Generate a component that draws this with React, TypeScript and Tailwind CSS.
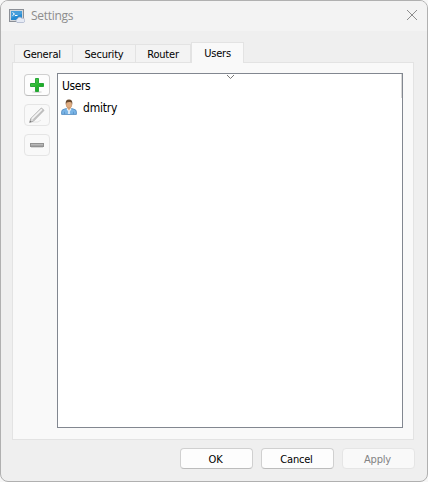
import React from 'react';

const PlusIcon = () => (
  <svg width="16" height="16" viewBox="0 0 16 16">
    <defs>
      <linearGradient id="green" x1="0" y1="0" x2="1" y2="1">
        <stop offset="0" stopColor="#54d052" />
        <stop offset="0.55" stopColor="#25b52c" />
        <stop offset="1" stopColor="#0c991c" />
      </linearGradient>
    </defs>
    <ellipse cx="8" cy="15" rx="5" ry="0.8" fill="#d0d0d0" />
    <path d="M6.5 1.5h3v5h5v3h-5v5h-3v-5h-5v-3h5z" fill="url(#green)" stroke="#27a737" />
  </svg>
);

const PencilIcon = () => (
  <svg width="16" height="16" viewBox="0 0 16 16">
    <path d="M2 15h7l3-2" fill="none" stroke="#e3e3e3" />
    <path d="M.6 15.4l1.2-3.8L12.4 1 15 3.4 4.4 14.2z" fill="#dcdcdc" stroke="#a6a6a6" strokeWidth="0.9" />
    <path d="M3 11.7L12.8 2.2" stroke="#f6f6f6" strokeWidth="1.2" />
    <path d="M4.3 12.9L14 3.3" stroke="#b0b0b0" strokeWidth="0.8" />
    <path d="M.6 15.4l.6-2 1.4 1.4z" fill="#777" />
  </svg>
);

const MinusIcon = () => (
  <svg width="16" height="16" viewBox="0 0 16 16">
    <rect x="2" y="10" width="12" height="1" fill="#d9d9d9" />
    <rect x="1.5" y="6.5" width="13" height="3" fill="#a5a5a5" stroke="#929292" />
    <path d="M2 7.5h12" stroke="#b8b8b8" />
  </svg>
);

const UserIcon = () => (
  <svg width="16" height="16" viewBox="0 0 16 16">
    <path d="M.6 15.4v-2.6q0-2.3 3-2.8L6 9.4h4l2.4.6q3 .5 3 2.8v2.6z" fill="#79b4e6" stroke="#4d87bd" strokeWidth="0.8" />
    <path d="M5.5 9.8L8 14l2.5-4.2L9.8 9H6.2z" fill="#f5f9fc" />
    <path d="M7.3 11h1.4l.5 4H6.8z" fill="#dce9f4" />
    <path d="M6.4 7.5h3.2v2.3L8 11.2 6.4 9.8z" fill="#d9a77b" />
    <ellipse cx="8" cy="5.3" rx="2.9" ry="3.8" fill="#e0ac80" stroke="#b58258" strokeWidth="0.5" />
    <path d="M4.8 5.5Q4 .5 8 .5t3.2 5l-.8-2.2Q8 2.7 5.6 3.4z" fill="#68492f" />
    <path d="M3.5 12.7v2.5M12.5 12.7v2.5" stroke="#4b86be" strokeWidth="0.6" />
  </svg>
);

const AppIcon = () => (
  <svg width="16" height="16" viewBox="0 0 16 16">
    <rect x="0.5" y="1.5" width="14" height="12" fill="#d5d7da" stroke="#8b8f96" />
    <rect x="2" y="3" width="11" height="9" fill="#268bd2" />
    <path d="M2 3h11v3L2 10z" fill="#469edb" />
    <path d="M3.5 4.5l2 1.5-2 1.5M6 7.5h2.5" fill="none" stroke="#fff" />
    <path d="M8 14.5a2 2 0 01.4-3.6 2.5 2.5 0 014.5-.6 2 2 0 011.6 4.2z" fill="#e5eaf4" stroke="#a3aec6" strokeWidth="0.7" />
  </svg>
);

const tabText = 'flex justify-center border-t border-r border-[#e3e3e3] bg-[#f3f3f3] h-[18px] text-[11px] leading-[20px]';

export default function App() {
  return (
    <div className="h-[482px] w-[428px] bg-[#f7f7f7] font-['DejaVu_Sans_Condensed','DejaVu_Sans',sans-serif] tracking-[-0.2px] text-black">
      <div className="flex h-[482px] w-[428px] flex-col overflow-hidden rounded-[8px] border border-[#b0b0b0] bg-[#efefef]">
        <header className="flex h-[30px] shrink-0 items-center bg-[#f3f3f3] pl-2 pr-[9px]">
          <AppIcon />
          <span className="ml-[6px] font-['Open_Sans'] text-[12px] leading-4 tracking-[-0.3px] text-[#8d8d8d]">Settings</span>
          <svg className="-mt-[2px] ml-auto" width="12" height="12" viewBox="0 0 12 12">
            <path d="M1 1l10 10M11 1L1 11" stroke="#8c8c8c" fill="none" />
          </svg>
        </header>

        <nav className="mt-[11px] flex h-5 shrink-0 items-end pl-[13px]">
          <div className={`${tabText} w-[59px] border-l pr-[3px]`}>General</div>
          <div className={`${tabText} w-[63px]`}>Security</div>
          <div className={`${tabText} w-[55px]`}>Router</div>
          <div className="z-10 -mb-px flex h-[21px] w-[53px] justify-center border border-b-0 border-[#e3e3e3] bg-[#f9f9f9] text-[11px] leading-[21px]">Users</div>
        </nav>

        <main className="ml-[11px] flex h-[378px] w-[402px] shrink-0 border border-[#e3e3e3] bg-[#f9f9f9] pl-[11px] pt-[10px]">
          <div className="flex w-[33px] flex-col gap-2 pt-px">
            <button className="flex h-[22px] w-[26px] items-center justify-center rounded-[4px] border border-[#d0d0d0] border-b-[#bcbcbc] bg-[#fdfdfd]"><PlusIcon /></button>
            <button className="flex h-[22px] w-[26px] items-center justify-center rounded-[4px] border border-[#e5e5e5] bg-[#f9f9f9]"><PencilIcon /></button>
            <button className="flex h-[22px] w-[26px] items-center justify-center rounded-[4px] border border-[#e5e5e5] bg-[#f9f9f9]"><MinusIcon /></button>
          </div>
          <section className="h-[355px] w-[346px] border border-[#828790] bg-white">
            <div className="relative flex h-[24px] items-center border-r border-[#d8d8d8] pl-1 text-[12px] tracking-[-0.4px]">
              Users
              <svg className="absolute left-[168px] top-0" width="9" height="6" viewBox="0 0 9 6">
                <path d="M1 1l3.5 3.5L8 1" fill="none" stroke="#777" />
              </svg>
            </div>
            <div className="flex h-5 items-center pl-[3px] text-[12px]">
              <span className="-mt-[2px]"><UserIcon /></span>
              <span className="ml-[6px]">dmitry</span>
            </div>
          </section>
        </main>

        <footer className="mt-2 flex gap-2 pl-[179px] text-[11px]">
          <button className="h-[21px] w-[73px] rounded-[4px] border border-[#d0d0d0] border-b-[#bcbcbc] bg-[#fdfdfd] pr-[2px] pt-px leading-[20px]">OK</button>
          <button className="h-[21px] w-[73px] rounded-[4px] border border-[#d0d0d0] border-b-[#bcbcbc] bg-[#fdfdfd] pr-[2px] pt-px leading-[20px]">Cancel</button>
          <button className="h-[21px] w-[73px] rounded-[4px] border border-[#e5e5e5] bg-[#f9f9f9] pr-[2px] pt-px leading-[20px] text-[#838383]">Apply</button>
        </footer>
      </div>
    </div>
  );
}
